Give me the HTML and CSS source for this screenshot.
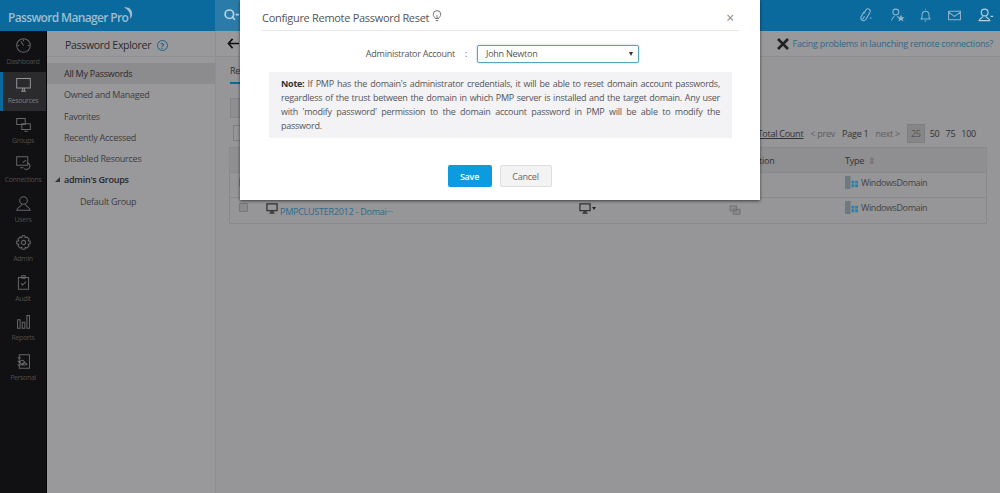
FILE: index.html
```html
<!DOCTYPE html>
<html lang="en">
<head>
  <meta charset="UTF-8">
  <title>Password Manager Pro</title>
  <link rel="stylesheet" href="styles.css">
</head>
<body>
  <!-- Top bar -->
  <div class="header">
    <div class="logo">Password Manager Pro
      <svg class="logo-arc" viewBox="0 0 14 14"><path d="M3 1.500C8 .5 12 4 11 9.500 10.600 11 10 12 9 13 10 8 8 4 3 1.500Z" fill="#9dbdd0"/></svg>
    </div>
    <div class="search">
      <svg class="ico" viewBox="0 0 20 20"><circle cx="7.500" cy="8.500" r="5" fill="none" stroke="#b9d3e2" stroke-width="2"/><path d="M11 12l3 3M15 9h4" stroke="#b9d3e2" stroke-width="2"/></svg>
    </div>
    <div class="header-icons">
      <svg class="ico" viewBox="0 0 20 20"><path d="M9 8l3-5a2.800 2.800 0 0 1 4.500 3.200l-5 8.500a3.200 3.200 0 0 1-5.500-3.200l3.500-6M10 11l-2 3.500" fill="none" stroke="#8fb5cc" stroke-width="1.300"/><path d="M16 13h2.500" stroke="#8fb5cc"/></svg>
      <svg class="ico" viewBox="0 0 20 20"><circle cx="8" cy="6" r="3.500" fill="none" stroke="#8fb5cc" stroke-width="1.200"/><path d="M3 16c0-3 2-4 3.500-5M9.500 11l2 1" fill="none" stroke="#8fb5cc" stroke-width="1.200"/><path d="M14 9l1.400 3h3l-2.400 2 1 3-3-1.800-3 1.800 1-3-2.400-2h3Z" fill="#8fb5cc"/></svg>
      <svg class="ico" viewBox="0 0 20 20"><path d="M5 14c1-1 1-3 1-5a4 4 0 0 1 8 0c0 2 0 4 1 5ZM9 16.500h2M10 3V2" fill="none" stroke="#8fb5cc" stroke-width="1.200"/></svg>
      <svg class="ico" viewBox="0 0 20 20"><path d="M3 5h14v10H3ZM3 6l7 5 7-5" fill="none" stroke="#8fb5cc" stroke-width="1.200"/></svg>
      <svg class="ico" viewBox="0 0 20 20"><circle cx="9" cy="6.500" r="4" fill="none" stroke="#b3cedd" stroke-width="1.400"/><path d="M7 11c0 2-4 2-4.500 5h12.500c-.5-3-4-3-4.500-5M16 11h3" fill="none" stroke="#b3cedd" stroke-width="1.400"/></svg>
    </div>
  </div>

  <div class="app">
    <!-- Icon rail -->
    <div class="rail">
      <div class="rail-item">
        <svg class="rail-ico" viewBox="0 0 20 20"><circle cx="10" cy="10" r="8"/><path d="M10 10L7 5M3 10h2M15 10h2M10 3v2"/></svg>
        <span>Dashboard</span>
      </div>
      <div class="rail-item active">
        <svg class="rail-ico" viewBox="0 0 20 20"><path d="M2 3h16v11H2ZM7 18h6M9 14v4M11 14v4"/></svg>
        <span>Resources</span>
      </div>
      <div class="rail-item">
        <svg class="rail-ico" viewBox="0 0 20 20"><path d="M2 3h10v7H2ZM8 9h10v7H8ZM11 18h4"/></svg>
        <span>Groups</span>
      </div>
      <div class="rail-item">
        <svg class="rail-ico" viewBox="0 0 20 20"><path d="M2 2h13v10H2ZM6 15h4M9 9l4-3M14 9a4 4 0 1 1-3 7"/></svg>
        <span>Connections</span>
      </div>
      <div class="rail-item">
        <svg class="rail-ico" viewBox="0 0 20 20"><circle cx="10" cy="6.500" r="4.500"/><path d="M8 11c0 2-5 3-6 7h16c-1-4-6-5-6-7"/></svg>
        <span>Users</span>
      </div>
      <div class="rail-item">
        <svg class="rail-ico" viewBox="0 0 20 20"><circle cx="10" cy="10" r="2.500"/><path d="M8.500 2h3l.5 2.500 2-1 2.500 2.500-1 2 2.500.5v3l-2.500.5 1 2-2.500 2.500-2-1-.5 2.500h-3l-.5-2.500-2 1L3.500 14l1-2L2 11.500v-3L4.500 8l-1-2L6 3.500l2 1Z"/></svg>
        <span>Admin</span>
      </div>
      <div class="rail-item">
        <svg class="rail-ico" viewBox="0 0 20 20"><path d="M4 4h12v14H4ZM8 2h4v3H8ZM7 11l2 2 4-4"/></svg>
        <span>Audit</span>
      </div>
      <div class="rail-item">
        <svg class="rail-ico" viewBox="0 0 20 20"><path d="M3 8h3v10H3ZM8.500 11h3v7h-3ZM14 3h3v15h-3Z"/></svg>
        <span>Reports</span>
      </div>
      <div class="rail-item">
        <svg class="rail-ico" viewBox="0 0 20 20"><path d="M5 2h12v16H5ZM3 6h4M3 10h4M3 14h4M8 14c0-2 2-2 3-3a2.500 2.500 0 1 1 0-.1c1 1 3 1 3 3Z"/></svg>
        <span>Personal</span>
      </div>
    </div>

    <!-- Explorer tree -->
    <div class="explorer">
      <div class="explorer-title">Password Explorer <span class="help">?</span></div>
      <div class="tree">
        <div class="tree-item selected">All My Passwords</div>
        <div class="tree-item">Owned and Managed</div>
        <div class="tree-item">Favorites</div>
        <div class="tree-item">Recently Accessed</div>
        <div class="tree-item">Disabled Resources</div>
        <div class="tree-item group"><i class="caret"></i>admin's Groups</div>
        <div class="tree-item child">Default Group</div>
      </div>
    </div>

    <!-- Main content behind the dialog -->
    <div class="content">
      <div class="subbar">
        <svg class="back" viewBox="0 0 14 12"><path d="M13 6H2M6 1L1.500 6 6 11" fill="none" stroke="#111" stroke-width="1.800"/></svg>
        <div class="notice">
          <svg class="tools" viewBox="0 0 14 14"><path d="M2 2l10 10M12 2L2 12" stroke="#222" stroke-width="2.600"/></svg>
          <a href="#">Facing problems in launching remote connections?</a>
        </div>
      </div>
      <div class="tabs"><span class="tab">Re</span></div>
      <div class="actions"><span class="action-btn">A</span></div>
      <div class="pager-row">
        <span class="check-box"></span>
        <div class="pager">
          <a class="total" href="#">Total Count</a>
          <span class="muted">&lt; prev</span>
          <span>Page 1</span>
          <span class="muted">next &gt;</span>
          <span class="size current">25</span>
          <span class="size">50</span>
          <span class="size">75</span>
          <span class="size">100</span>
        </div>
      </div>
      <div class="table">
        <div class="row head">
          <span></span><span></span><span></span><span>Connection</span><span>Type &nbsp;<i class="sort">⇕</i></span>
        </div>
        <div class="row">
          <span class="check"></span><span></span><span></span><span></span>
          <span class="type"><svg class="win" viewBox="0 0 14 14"><use href="#win"/></svg>WindowsDomain</span>
        </div>
        <div class="row">
          <span class="check"></span>
          <span class="name">
            <svg class="pc" viewBox="0 0 14 13"><path d="M1 1h12v8H1ZM4 12h6M6 9v3M8 9v3" fill="none" stroke="#333" stroke-width="1.500"/></svg>
            <a href="#">PMPCLUSTER2012 - Domai···</a>
          </span>
          <span class="pc-menu"><svg class="pc" viewBox="0 0 14 13"><path d="M1 1h12v8H1ZM4 12h6M6 9v3M8 9v3" fill="none" stroke="#333" stroke-width="1.500"/></svg><i class="caret-down"></i></span>
          <span class="conn"><svg class="pc" viewBox="0 0 14 13"><path d="M1 1h8v6H1ZM5 5h8v6H5Z" fill="#8a898b" stroke="#6f6e70"/></svg></span>
          <span class="type"><svg class="win" viewBox="0 0 14 14"><use href="#win"/></svg>WindowsDomain</span>
        </div>
      </div>
    </div>
  </div>

  <svg class="defs" width="0" height="0">
    <symbol id="win" viewBox="0 0 14 14">
      <path d="M0 0h6v14H0Z" fill="#6d7a80"/>
      <path d="M7 5h3v3H7ZM11 5h3v3h-3ZM7 9h3v3H7ZM11 9h3v3h-3Z" fill="#1d86b5"/>
    </symbol>
  </svg>

  <!-- Configure dialog -->
  <div class="modal">
    <div class="modal-head">
      <span class="modal-title">Configure Remote Password Reset</span>
      <svg class="bulb" viewBox="0 0 12 14"><path d="M4 10C3 8 1.500 7 1.500 5a4.500 4.500 0 0 1 9 0c0 2-1.500 3-2.500 5ZM4.500 12.500h3M6 10V6" fill="none" stroke="#555" stroke-width="1"/></svg>
      <span class="close">×</span>
    </div>
    <div class="field">
      <label class="field-label">Administrator Account</label>
      <span class="colon">:</span>
      <div class="select">John Newton<i class="select-arrow"></i></div>
    </div>
    <div class="note"><b>Note:</b> If PMP has the domain's administrator credentials, it will be able to reset domain account passwords, regardless of the trust between the domain in which PMP server is installed and the target domain. Any user with 'modify password' permission to the domain account password in PMP will be able to modify the password.</div>
    <div class="buttons">
      <button class="btn save">Save</button>
      <button class="btn cancel">Cancel</button>
    </div>
  </div>
</body>
</html>
```

FILE: styles.css
```css
html, body {
  margin: 0;
  padding: 0;
  height: 100%;
  overflow: hidden;
}
body {
  font-family: 'Open Sans', Arial, sans-serif;
  background-color: #969597;
  color: #333;
  font-size: 9px;
  letter-spacing: -0.25px;
}
a {
  color: #2d6a8e;
  text-decoration: none;
}

/* === HEADER === */
.header {
  display: flex;
  height: 31px;
  background-color: #0a6a9e;
}
.logo {
  position: relative;
  width: 207px;
  padding-left: 8px;
  box-sizing: border-box;
  font-size: 12px;
  font-weight: 600;
  letter-spacing: -0.65px;
  line-height: 35px;
  color: #9dbdd0;
}
.logo-arc {
  position: absolute;
  left: 121px;
  top: 6px;
  width: 14px;
  height: 14px;
}
.search {
  width: 25px;
  margin-left: 8px;
  display: flex;
  align-items: center;
  padding-left: 8px;
  box-sizing: border-box;
  background-color: #2b7ba8;
}
.ico {
  width: 17px;
  height: 17px;
  flex-shrink: 0;
}
.header-icons {
  flex-grow: 1;
  display: flex;
  align-items: center;
  justify-content: flex-end;
  padding-right: 6px;
}
.header-icons .ico:nth-child(1) { margin-right: 16px; }
.header-icons .ico:nth-child(2) { margin-right: 11px; }
.header-icons .ico:nth-child(3) { margin-right: 12px; }
.header-icons .ico:nth-child(4) { margin-right: 14px; }

/* === LAYOUT === */
.app {
  display: flex;
  height: 462px;
}
.rail {
  width: 46px;
  flex-shrink: 0;
  background-color: #111012;
  border-right: 1px solid #050505;
  padding-top: 1px;
}
.rail-item {
  height: 39.500px;
  display: flex;
  flex-direction: column;
  align-items: center;
  justify-content: flex-end;
  box-sizing: border-box;
  padding-bottom: 5px;
  font-size: 7px;
  letter-spacing: -0.35px;
  line-height: 10px;
  color: #4f4e50;
}
.rail-item.active {
  background-color: #2b2a2c;
  border-left: 3px solid #0a6a9e;
  padding-right: 3px;
  color: #7c7b7d;
}
.rail-ico {
  width: 17px;
  height: 17px;
  margin-bottom: 3px;
  fill: none;
  stroke: #666567;
  stroke-width: 1.200;
}
.rail-item.active .rail-ico {
  stroke: #949395;
}

/* === EXPLORER === */
.explorer {
  width: 168px;
  flex-shrink: 0;
  background-color: #99989a;
  border-right: 1px solid #8f8e90;
}
.explorer-title {
  height: 26px;
  padding-left: 18px;
  font-size: 10.500px;
  letter-spacing: -0.3px;
  line-height: 28px;
  color: #2c2b2d;
  border-bottom: 1px solid #908f91;
  box-sizing: border-box;
}
.help {
  display: inline-block;
  width: 9px;
  height: 9px;
  margin-left: 3px;
  border: 1px solid #1c648c;
  border-radius: 50%;
  font-size: 8px;
  font-weight: 700;
  line-height: 9px;
  text-align: center;
  color: #1c648c;
}
.tree {
  padding-top: 6px;
}
.tree-item {
  position: relative;
  height: 21.300px;
  padding-left: 17px;
  line-height: 21px;
  color: #3e3d3f;
}
.tree-item.selected {
  background-color: #8c8b8d;
  color: #2a292b;
}
.tree-item.group {
  font-weight: 600;
  color: #2a292b;
}
.tree-item.child {
  padding-left: 33px;
}
.caret {
  position: absolute;
  left: 8px;
  top: 8px;
  border-bottom: 5px solid #333;
  border-left: 5px solid transparent;
}

/* === CONTENT === */
.content {
  flex-grow: 1;
  background-color: #969597;
}
.subbar {
  display: flex;
  align-items: center;
  justify-content: space-between;
  height: 26px;
  padding: 0 7px 0 11px;
  background-color: #99989a;
  border-bottom: 1px solid #8d8c8e;
  box-sizing: border-box;
}
.back {
  width: 13px;
  height: 11px;
}
.notice {
  display: flex;
  align-items: center;
  gap: 3px;
}
.tools {
  width: 14px;
  height: 14px;
}
.tabs {
  height: 25px;
  padding: 7px 0 0 14px;
  box-sizing: border-box;
}
.tab {
  display: inline-block;
  width: 30px;
  height: 18px;
  line-height: 14px;
  border-bottom: 2px solid #0a6a9e;
}
.actions {
  height: 27px;
  padding: 16px 0 0 14px;
}
.action-btn {
  display: inline-block;
  height: 18px;
  padding: 0 10px;
  line-height: 18px;
  border: 1px solid #858486;
  background-color: #8f8e90;
}
.pager-row {
  display: flex;
  align-items: center;
  justify-content: space-between;
  height: 22px;
  padding: 0 23px 0 17px;
  margin-top: -3px;
}
.check-box {
  width: 30px;
  height: 14px;
  border: 1px solid #7f7e80;
}
.pager {
  display: flex;
  align-items: center;
  gap: 7px;
  color: #333;
}
.total {
  color: #333;
  text-decoration: underline;
}
.muted {
  color: #5f5e60;
}
.size {
  margin-left: -3px;
  padding: 0 1px;
}
.size.current {
  margin-left: 0;
  padding: 2px 3px;
  background-color: #868587;
  border: 1px solid #7e7d7f;
  color: #555;
}

/* === TABLE === */
.table {
  width: 756px;
  margin: 3px 0 0 13px;
  border: 1px solid #8a898b;
}
.row {
  display: grid;
  grid-template-columns: 36px 313px 150px 116px 1fr;
  align-items: center;
  height: 25px;
  border-bottom: 1px solid #8a898b;
  box-sizing: border-box;
}
.row:last-child {
  border-bottom: none;
}
.row.head {
  background-color: #8f8e90;
  color: #333;
}
.sort {
  font-style: normal;
  color: #666;
}
.check {
  width: 7px;
  height: 7px;
  margin: 0 0 6px 9px;
  border: 1px solid #777;
  background-color: #8a898b;
  border-radius: 1px;
}
.name {
  display: flex;
  align-items: center;
  gap: 2px;
}
.name .pc {
  margin-bottom: 5px;
}
.name a {
  position: relative;
  top: 1px;
}
.pc {
  width: 12px;
  height: 11px;
}
.pc-menu {
  display: flex;
  align-items: center;
  gap: 1px;
  margin-bottom: 5px;
}
.caret-down {
  border-top: 3px solid #222;
  border-left: 2.500px solid transparent;
  border-right: 2.500px solid transparent;
}
.conn {
  position: relative;
  top: 1px;
}
.type {
  display: flex;
  align-items: center;
  gap: 3px;
  margin-bottom: 6px;
  letter-spacing: -0.4px;
  color: #444;
}
.win {
  width: 13px;
  height: 13px;
}
.defs {
  position: absolute;
}

/* === DIALOG === */
.modal {
  position: absolute;
  left: 240px;
  top: 0;
  width: 520px;
  height: 200px;
  box-sizing: border-box;
  padding: 0 21px 0 22px;
  background-color: #fff;
  box-shadow: 0 1px 3px rgba(0, 0, 0, 0.6);
}
.modal-head {
  display: flex;
  align-items: center;
  height: 31px;
  padding-top: 5px;
  box-sizing: border-box;
  border-bottom: 1px solid #e6e6ec;
}
.modal-title {
  font-size: 11px;
  letter-spacing: -0.3px;
  color: #555;
}
.bulb {
  width: 10px;
  height: 12px;
  margin: -3px 0 0 3px;
}
.close {
  margin-left: auto;
  margin-right: 5px;
  font-size: 14px;
  color: #888;
}
.field {
  display: flex;
  align-items: center;
  height: 19px;
  margin-top: 13px;
}
.field-label {
  width: 193px;
  text-align: right;
  color: #555;
}
.colon {
  margin: 0 9px 0 10px;
  width: 3px;
  color: #666;
}
.select {
  position: relative;
  width: 162px;
  height: 18px;
  box-sizing: border-box;
  padding-left: 8px;
  border: 1px solid #5aa3b8;
  border-radius: 2px;
  box-shadow: 0 0 2px #8fc6d6;
  line-height: 16px;
  color: #555;
}
.select-arrow {
  position: absolute;
  right: 5px;
  top: 6px;
  border-top: 4px solid #333;
  border-left: 2px solid transparent;
  border-right: 2px solid transparent;
}
.note {
  margin: 9px 7px 0;
  padding: 5px 12px;
  background-color: #f3f2f5;
  line-height: 14px;
  text-align: justify;
  color: #555;
}
.note b {
  color: #333;
}
.buttons {
  display: flex;
  justify-content: center;
  gap: 8px;
  margin-top: 27px;
  padding-right: 2px;
}
.btn {
  height: 22px;
  padding: 0;
  font-family: 'Open Sans', Arial, sans-serif;
  font-size: 9px;
  font-weight: 600;
  letter-spacing: -0.25px;
  border-radius: 2px;
  cursor: pointer;
}
.save {
  width: 44px;
  border: none;
  background-color: #0d9be0;
  color: #fff;
}
.cancel {
  width: 52px;
  border: 1px solid #dedede;
  background-color: #f3f3f3;
  color: #666;
  font-weight: 400;
}
```
